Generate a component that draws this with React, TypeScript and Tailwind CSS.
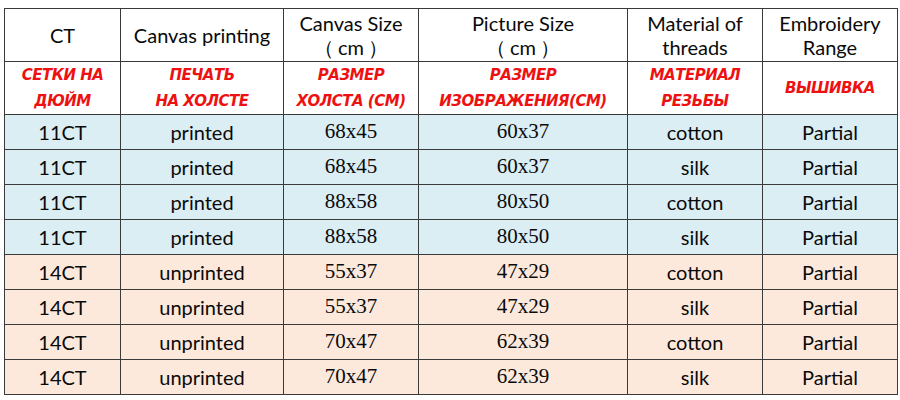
type Row = {
  ct: string;
  print: string;
  canvas: string;
  picture: string;
  thread: string;
  tone: "blue" | "peach";
};

const rows: Row[] = [
  { ct: "11CT", print: "printed", canvas: "68x45", picture: "60x37", thread: "cotton", tone: "blue" },
  { ct: "11CT", print: "printed", canvas: "68x45", picture: "60x37", thread: "silk", tone: "blue" },
  { ct: "11CT", print: "printed", canvas: "88x58", picture: "80x50", thread: "cotton", tone: "blue" },
  { ct: "11CT", print: "printed", canvas: "88x58", picture: "80x50", thread: "silk", tone: "blue" },
  { ct: "14CT", print: "unprinted", canvas: "55x37", picture: "47x29", thread: "cotton", tone: "peach" },
  { ct: "14CT", print: "unprinted", canvas: "55x37", picture: "47x29", thread: "silk", tone: "peach" },
  { ct: "14CT", print: "unprinted", canvas: "70x47", picture: "62x39", thread: "cotton", tone: "peach" },
  { ct: "14CT", print: "unprinted", canvas: "70x47", picture: "62x39", thread: "silk", tone: "peach" },
];

const sans = "font-['Lato','Open_Sans',sans-serif]";
const cell = "border border-[#3a3a3a] text-center align-middle p-0";

function Cm() {
  return (
    <span>
      <span className="mr-[4px]">（</span>cm<span className="ml-[4px]">）</span>
    </span>
  );
}

export default function App() {
  return (
    <div className="w-[900px] h-[400px] bg-white pt-[8px] pl-[4px]">
      <table className="table-fixed border-collapse w-[893px] text-[#0a0a0a]">
        <colgroup>
          <col className="w-[116px]" />
          <col className="w-[163px]" />
          <col className="w-[135px]" />
          <col className="w-[209px]" />
          <col className="w-[135px]" />
          <col className="w-[135px]" />
        </colgroup>
        <thead>
          <tr className={`h-[53px] text-[20px] leading-[24px] ${sans}`}>
            <th className={`${cell} font-normal`}>CT</th>
            <th className={`${cell} font-normal`}>Canvas printing</th>
            <th className={`${cell} font-normal`}>
              Canvas Size
              <br />
              <Cm />
            </th>
            <th className={`${cell} font-normal`}>
              Picture Size
              <br />
              <Cm />
            </th>
            <th className={`${cell} font-normal`}>
              Material of
              <br />
              threads
            </th>
            <th className={`${cell} font-normal`}>
              Embroidery
              <br />
              Range
            </th>
          </tr>
          <tr className="h-[52px] text-[15px] leading-[26px] font-['DejaVu_Sans',sans-serif] font-bold italic text-[#ee1111] tracking-[-0.5px]">
            <th className={cell}>
              СЕТКИ НА
              <br />
              ДЮЙМ
            </th>
            <th className={cell}>
              ПЕЧАТЬ
              <br />
              НА ХОЛСТЕ
            </th>
            <th className={cell}>
              РАЗМЕР
              <br />
              ХОЛСТА (СМ)
            </th>
            <th className={cell}>
              РАЗМЕР
              <br />
              ИЗОБРАЖЕНИЯ(СМ)
            </th>
            <th className={cell}>
              МАТЕРИАЛ
              <br />
              РЕЗЬБЫ
            </th>
            <th className={cell}>ВЫШИВКА</th>
          </tr>
        </thead>
        <tbody>
          {rows.map((r, i) => (
            <tr
              key={i}
              className={`h-[35px] ${r.tone === "blue" ? "bg-[#dbeef3]" : "bg-[#fde9dc]"}`}
            >
              <td className={`${cell} ${sans} text-[20px]`}>{r.ct}</td>
              <td className={`${cell} ${sans} text-[20px]`}>{r.print}</td>
              <td className={`${cell} font-['Liberation_Serif',serif] text-[21px]`}>{r.canvas}</td>
              <td className={`${cell} font-['Liberation_Serif',serif] text-[21px]`}>{r.picture}</td>
              <td className={`${cell} ${sans} text-[20px]`}>{r.thread}</td>
              <td className={`${cell} ${sans} text-[20px]`}>Partial</td>
            </tr>
          ))}
        </tbody>
      </table>
    </div>
  );
}
